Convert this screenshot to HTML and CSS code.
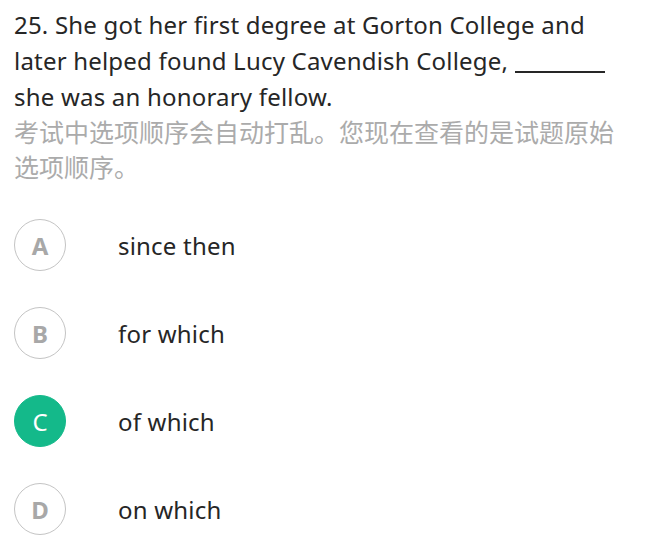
FILE: index.html
```html
<!DOCTYPE html>
<html>
<head>
<meta charset="utf-8">
<link rel="stylesheet" href="styles.css">
</head>
<body>
<div class="page">
  <div class="question">25. She got her first degree at Gorton College and later helped found Lucy Cavendish College, <span class="blank"></span> she was an honorary fellow.</div>
  <div class="note">考试中选项顺序会自动打乱。您现在查看的是试题原始选项顺序。</div>
  <div class="options">
    <div class="option"><span class="badge">A</span><span class="label">since then</span></div>
    <div class="option"><span class="badge">B</span><span class="label">for which</span></div>
    <div class="option"><span class="badge selected">C</span><span class="label">of which</span></div>
    <div class="option"><span class="badge">D</span><span class="label">on which</span></div>
  </div>
</div>
</body>
</html>
```
FILE: styles.css
```css
html, body { margin: 0; padding: 0; background: #fff; }
.page {
  padding: 0 20px 0 14px;
  font-family: "Noto Sans", "Noto Sans CJK SC", sans-serif;
  color: #262626;
}
.question {
  font-size: 24px;
  letter-spacing: 0.2px;
  line-height: 36px;
  padding-top: 7px;
}
.blank {
  display: inline-block;
  width: 90px;
  height: 2px;
  background: #262626;
  vertical-align: -3px;
}
.note {
  font-size: 25px;
  line-height: 35px;
  margin-top: -1px;
  color: #ababab;
  font-family: "Noto Sans CJK SC", sans-serif;
}
.options {
  margin-top: 17px;
  display: flex;
  flex-direction: column;
}
.option {
  display: flex;
  align-items: center;
  height: 88px;
}
.badge {
  width: 50px;
  height: 50px;
  border: 1.5px solid #c4c4c4;
  border-radius: 50%;
  display: flex;
  align-items: center;
  justify-content: center;
  font-size: 24px;
  color: #a8a8a8;
  font-weight: 700;
  flex: none;
}
.badge.selected {
  background: #14b98a;
  border-color: #14b98a;
  color: #fff;
  font-weight: 400;
}
.label {
  margin-left: 52px;
  font-size: 24px;
  letter-spacing: 0.2px;
}
```
